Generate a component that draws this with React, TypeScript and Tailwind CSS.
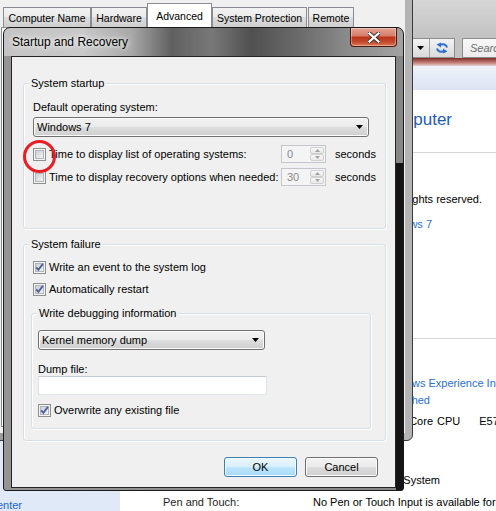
import React from "react";

function CheckBox({ checked }: { checked?: boolean }) {
  return (
    <svg width="13" height="13" viewBox="0 0 13 13" className="shrink-0">
      <defs>
        <linearGradient id="cbg" x1="0" y1="0" x2="1" y2="1">
          <stop offset="0" stopColor="#c9cdd3" />
          <stop offset="1" stopColor="#f6f6f6" />
        </linearGradient>
      </defs>
      <rect x="0.5" y="0.5" width="12" height="12" fill="#f4f4f4" stroke="#8e8f8f" />
      <rect x="2.5" y="2.5" width="8" height="8" fill="url(#cbg)" stroke="#b1b5bb" />
      {checked && (
        <path d="M3.2 6.3 L5.4 8.9 L9.9 2.9" fill="none" stroke="#4a5f9b" strokeWidth="1.8" />
      )}
    </svg>
  );
}

function DownArrow() {
  return (
    <svg width="7" height="4" viewBox="0 0 7 4" className="shrink-0">
      <path d="M0 0 H7 L3.5 4 Z" fill="#000" />
    </svg>
  );
}

function Combo({ text, className }: { text: string; className: string }) {
  return (
    <div
      className={
        "h-[20px] shrink-0 flex items-center justify-between rounded-[3px] border border-[#707070] bg-[linear-gradient(#f2f2f2_0%,#ebebeb_50%,#dddddd_50%,#cfcfcf_100%)] shadow-[inset_0_0_0_1px_#fcfcfc] pl-[3px] pr-[5px] leading-[16px] " +
        className
      }
    >
      <span>{text}</span>
      <DownArrow />
    </div>
  );
}

function Spinner({ value }: { value: string }) {
  return (
    <div className="w-[45px] h-[18px] shrink-0 border border-[#c3c6ca] bg-[#f4f4f4] flex items-stretch">
      <span className="flex-1 pl-[5px] text-[#8a8a8a] leading-[16px]">{value}</span>
      <div className="w-[16px] flex flex-col p-px">
        <div className="flex-1 border border-[#d0d0d0] rounded-[2px] bg-[linear-gradient(#f8f8f8,#e8e8e8)] flex items-center justify-center">
          <svg width="5" height="3" viewBox="0 0 5 3">
            <path d="M0 3 L2.5 0 L5 3 Z" fill="#a2a2a2" />
          </svg>
        </div>
        <div className="flex-1 border border-[#d0d0d0] rounded-[2px] bg-[linear-gradient(#f8f8f8,#e8e8e8)] flex items-center justify-center">
          <svg width="5" height="3" viewBox="0 0 5 3">
            <path d="M0 0 L5 0 L2.5 3 Z" fill="#a2a2a2" />
          </svg>
        </div>
      </div>
    </div>
  );
}

function Group({
  title,
  className,
  children,
}: {
  title: string;
  className: string;
  children?: React.ReactNode;
}) {
  return (
    <div
      className={
        "shrink-0 border border-[#d5dfe5] rounded-[3px] shadow-[inset_1px_1px_0_#fff,1px_1px_0_#fff] flex flex-col " +
        className
      }
    >
      <div className="-mt-[9px] ml-[5px] px-[2px] self-start bg-[#f0f0f0] leading-[16px]">{title}</div>
      {children}
    </div>
  );
}

function CheckRow({
  label,
  checked,
  className,
}: {
  label: string;
  checked?: boolean;
  className: string;
}) {
  return (
    <div className={"h-[16px] flex items-center gap-[3px] leading-[16px] " + className}>
      <CheckBox checked={checked} />
      <span>{label}</span>
    </div>
  );
}

function TimeRow({ label, value, className }: { label: string; value: string; className: string }) {
  return (
    <div className={"h-[18px] flex items-center pl-[9px] " + className}>
      <div className="w-[248px] flex items-center gap-[3px] leading-[16px]">
        <CheckBox />
        <span className="whitespace-nowrap">{label}</span>
      </div>
      <Spinner value={value} />
      <span className="ml-[9px] leading-[16px]">seconds</span>
    </div>
  );
}

function Refresh() {
  return (
    <svg width="14" height="14" viewBox="0 0 14 14">
      <path d="M12 6.5 C11.5 3.5 8 2.5 5 4" fill="none" stroke="#2c6fd1" strokeWidth="2" />
      <path d="M1.5 3.5 L6 1.5 L6 6.5 Z" fill="#2c6fd1" />
      <path d="M2 7.5 C2.5 10.5 6 11.5 9 10" fill="none" stroke="#2c6fd1" strokeWidth="2" />
      <path d="M12.5 10.5 L8 12.5 L8 7.5 Z" fill="#2c6fd1" />
    </svg>
  );
}

function Tab({ label, className, active }: { label: string; className: string; active?: boolean }) {
  return (
    <div
      className={
        (active
          ? "h-[24px] bg-white "
          : "h-[20px] bg-[linear-gradient(#f2f2f2_0%,#ebebeb_50%,#dddddd_50%,#cfcfcf_100%)] ") +
        "shrink-0 border border-b-0 border-[#898c95] flex items-center justify-center whitespace-nowrap text-[10.5px] leading-[16px] " +
        className
      }
    >
      {label}
    </div>
  );
}

export default function App() {
  return (
    <div className="relative w-[496px] h-[511px] overflow-hidden bg-white font-['Liberation_Sans',Arial,sans-serif] text-[11px] text-black">
      {/* Control Panel window (background) */}
      <div className="absolute inset-0 flex flex-col bg-white">
        <div className="h-[36px] shrink-0 bg-[linear-gradient(#d6d6d6,#c3c3c3)]" />
        <div className="h-[22px] shrink-0 bg-[#c3c3c3] pt-[2px] flex">
          <div className="ml-[412px] w-[43px] h-[20px] flex border border-l-0 border-[#8c8c8c] bg-[linear-gradient(#f3f3f3,#dadada)]">
            <div className="w-[18px] flex items-center justify-center border-r border-[#a3a3a3]">
              <DownArrow />
            </div>
            <div className="flex-1 flex items-center justify-center">
              <Refresh />
            </div>
          </div>
          <div className="ml-[7px] flex-1 h-[20px] border border-r-0 border-[#8c8c8c] rounded-l-[2px] bg-[linear-gradient(#f8f8f8,#ececec)] pl-[7px] italic text-[#6d6d6d] leading-[18px] whitespace-nowrap overflow-hidden">
            Search
          </div>
        </div>
        <div className="h-[8px] shrink-0 bg-[linear-gradient(#7c2e29,#c4817a_60%,#ead2d3)]" />
        <div className="h-[24px] shrink-0 bg-[linear-gradient(#eef2fa,#dbe4f4)]" />
        <div className="flex-1 flex">
          <div className="w-[120px] shrink-0 bg-[#dfe9f7] flex flex-col">
            <div className="mt-[407px] w-[22px] h-[16px] flex justify-end whitespace-nowrap leading-[16px] text-[#1a66cc]">
              Action Center
            </div>
          </div>
          <div className="flex-1 flex flex-col whitespace-nowrap">
            <div className="mt-[20px] h-[20px] w-[332px] flex justify-end text-[17px] leading-[20px] text-[#1e5bb8]">
              View basic information about your computer
            </div>
            <div className="mt-[22px] h-px ml-[30px] bg-[#d6d6d6]" />
            <div className="mt-[38px] h-[16px] w-[362px] flex justify-end leading-[16px]">
              Copyright © 2009 Microsoft Corporation. All rights reserved.
            </div>
            <div className="mt-[9px] h-[16px] w-[312px] flex justify-end leading-[16px] text-[#2a6fd3]">
              Get more features with a new edition of Windows 7
            </div>
            <div className="mt-[106px] h-px ml-[30px] bg-[#d6d6d6]" />
            <div className="mt-[36px] h-[16px] flex leading-[16px] text-[#2a6fd3]">
              <div className="w-[292px] flex justify-end">Your Windo</div>
              <span>ws Experience Index needs to be</span>
            </div>
            <div className="mt-[1px] h-[16px] w-[310px] flex justify-end leading-[16px] text-[#2a6fd3]">
              refreshed
            </div>
            <div className="mt-[5px] h-[16px] flex leading-[16px]">
              <div className="w-[313px] flex justify-end">Pentium(R) Dual-Core</div>
              <span className="ml-[4px]">CPU</span>
              <span className="ml-[19px]">E5700 @ 3.00GHz</span>
            </div>
            <div className="mt-[43px] h-[16px] w-[320px] flex justify-end leading-[16px]">
              64-bit Operating System
            </div>
            <div className="mt-[6px] h-[16px] flex leading-[16px]">
              <span className="ml-[43px] w-[150px] text-[#1e1e1e]">Pen and Touch:</span>
              <span>No Pen or Touch Input is available for this Display</span>
            </div>
          </div>
        </div>
      </div>

      {/* System Properties window (behind dialog) */}
      <div className="absolute left-[-12px] top-[-40px] w-[425px] h-[481px] border border-[#3a3a3a] rounded-b-[6px] bg-[linear-gradient(90deg,#9a9a9a,#b4b4b4)] px-[7px] pb-[7px] pt-[33px] flex">
        <div className="flex-1 bg-[#f0f0f0] flex flex-col pt-[9px]">
          <div className="h-[24px] flex items-end pl-[7px]">
            <Tab label="Computer Name" className="w-[88px]" />
            <Tab label="Hardware" className="w-[56px]" />
            <Tab label="Advanced" className="w-[65px]" active />
            <Tab label="System Protection" className="w-[95px]" />
            <Tab label="Remote" className="ml-[1px] w-[46px]" />
          </div>
          <div className="flex-1 ml-[5px] mr-[6px] mb-[6px] border border-[#898c95] bg-white" />
        </div>
      </div>

      {/* Startup and Recovery dialog */}
      <div className="absolute left-[3px] top-[27px] w-[401px] h-[464px] rounded-t-[7px] rounded-b-[3px] border border-[#1b1b1b] px-[7px] pb-[2px] flex flex-col [background:linear-gradient(#151515,#151515)_right_top_135px/7px_100%_no-repeat,linear-gradient(90deg,#c4c4c4_0%,#c8c8c8_20%,#a8a8a8_32%,#606060_42%,#787878_52%,#505050_62%,#6b6b6b_74%,#8a8a8a_86%,#a2a2a2_100%)_0_0/100%_28px_no-repeat,linear-gradient(90deg,#959595,#868686)]">
        <div className="h-[28px] shrink-0 flex items-start justify-between">
          <span className="self-center pl-[1px] text-[12px] leading-[16px] [text-shadow:0_0_8px_#ffffff,0_0_4px_#ffffff]">
            Startup and Recovery
          </span>
          <div className="-mr-[1px] w-[47px] h-[19px] rounded-b-[4px] border border-t-0 border-[#4a1a10] bg-[linear-gradient(#e6a394_0%,#d67f6b_42%,#bd3519_52%,#c2462a_75%,#dc7a5a_100%)] shadow-[inset_0_0_0_1px_rgba(255,255,255,0.35)] flex items-center justify-center">
            <svg width="12" height="11" viewBox="0 0 12 11">
              <path d="M1.5 1.5 L10.5 9.5 M10.5 1.5 L1.5 9.5" stroke="#3a2a28" strokeWidth="4" strokeLinecap="square" />
              <path d="M1.5 1.5 L10.5 9.5 M10.5 1.5 L1.5 9.5" stroke="#ffffff" strokeWidth="2.2" strokeLinecap="square" />
            </svg>
          </div>
        </div>

        <div className="flex-1 border border-[#242424] bg-[#f0f0f0] flex flex-col">
          <Group title="System startup" className="mt-[26px] ml-[11px] w-[363px] h-[146px]">
            <div className="mt-[8px] pl-[9px] leading-[16px]">Default operating system:</div>
            <Combo className="mt-[2px] ml-[9px] w-[336px]" text="Windows 7" />
            <TimeRow className="mt-[8px]" label="Time to display list of operating systems:" value="0" />
            <TimeRow className="mt-[5px]" label="Time to display recovery options when needed:" value="30" />
          </Group>

          <Group title="System failure" className="mt-[15px] ml-[11px] w-[363px] h-[197px]">
            <CheckRow checked className="mt-[7px] pl-[9px]" label="Write an event to the system log" />
            <CheckRow checked className="mt-[6px] pl-[9px]" label="Automatically restart" />
            <Group title="Write debugging information" className="mt-[16px] ml-[7px] w-[340px] h-[116px]">
              <Combo className="mt-[9px] ml-[6px] w-[227px]" text="Kernel memory dump" />
              <div className="mt-[13px] pl-[6px] leading-[13px]">Dump file:</div>
              <div className="ml-[6px] w-[229px] h-[19px] shrink-0 bg-white border border-[#dde3ea] border-t-[#c5cbd2]" />
              <CheckRow checked className="mt-[7px] pl-[6px]" label="Overwrite any existing file" />
            </Group>
          </Group>

          <div className="mt-[16px] flex justify-end gap-[8px] pr-[17px]">
            <div className="w-[73px] h-[20px] rounded-[3px] border border-[#3c7fb1] bg-[linear-gradient(#eaf6fd_0%,#d9f0fc_50%,#bee6fd_50%,#a7d9f5_100%)] shadow-[inset_0_0_0_1px_#f4fbff] flex items-center justify-center leading-[16px]">
              OK
            </div>
            <div className="w-[73px] h-[20px] rounded-[3px] border border-[#707070] bg-[linear-gradient(#f2f2f2_0%,#ebebeb_50%,#dddddd_50%,#cfcfcf_100%)] shadow-[inset_0_0_0_1px_#fcfcfc] flex items-center justify-center leading-[16px]">
              Cancel
            </div>
          </div>
        </div>
      </div>

      {/* red annotation circle */}
      <div className="absolute left-[23px] top-[140px] w-[33px] h-[33px] rounded-full border-[3px] border-[#ea1c24]" />
    </div>
  );
}
